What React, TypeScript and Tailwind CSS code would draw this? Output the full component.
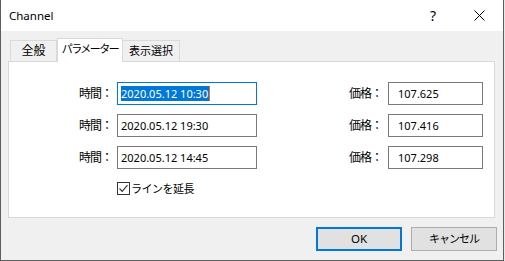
import React from 'react';

const ui = { fontFamily: '"Noto Sans", "Noto Sans CJK JP", sans-serif' };

interface RowProps {
  time: string;
  price: string;
  focused?: boolean;
}

function ParamRow({ time, price, focused = false }: RowProps) {
  return (
    <div className="flex items-center h-[23px]">
      <span className="w-[103px] text-right text-[12px] leading-none text-black tracking-[-1px] whitespace-nowrap">時間：</span>
      <div
        className={`ml-[5px] w-[140px] h-[23px] flex items-center pl-[3px] bg-white border ${
          focused ? 'border-[#0078d7]' : 'border-[#7a7a7a]'
        }`}
      >
        {focused ? (
          <span className="flex items-center h-[15px] pr-[1px] bg-[#0078d7] text-white text-[11px] leading-none border-r border-[#e07020]">
            {time}
          </span>
        ) : (
          <span className="text-[11px] leading-none text-black">{time}</span>
        )}
      </div>
      <span className="w-[125px] text-right text-[12px] leading-none text-black tracking-[-1px] whitespace-nowrap">価格：</span>
      <div className="ml-[6px] w-[95px] h-[23px] flex items-center pl-[9px] bg-white border border-[#7a7a7a]">
        <span className="text-[11px] leading-none text-black">{price}</span>
      </div>
    </div>
  );
}

export default function App() {
  const rows: RowProps[] = [
    { time: '2020.05.12 10:30', price: '107.625', focused: true },
    { time: '2020.05.12 19:30', price: '107.416' },
    { time: '2020.05.12 14:45', price: '107.298' },
  ];

  return (
    <div className="w-[505px] h-[261px] bg-[#e8e8e8]" style={ui}>
      <div className="w-[504px] h-[261px] flex flex-col bg-[#f0f0f0] border-l border-r border-b border-[#5e5e5e]">
        {/* タイトルバー */}
        <div className="h-[31px] bg-white flex items-center">
          <span className="ml-[8px] text-[11.5px] text-black">Channel</span>
          <div className="flex-1" />
          <div className="w-[46px] h-[31px] flex items-center justify-center text-[14px] text-black">?</div>
          <div className="w-[46px] h-[31px] flex items-center justify-center mr-[1px]">
            <svg width="11" height="11" viewBox="0 0 11 11">
              <path d="M0.5 0.5 L10.5 10.5 M10.5 0.5 L0.5 10.5" stroke="#000" strokeWidth="1" />
            </svg>
          </div>
        </div>

        {/* タブ */}
        <div className="flex items-end h-[30px] pl-[9px]">
          <div className="w-[47px] h-[21px] bg-[#f0f0f0] border border-b-0 border-[#d9d9d9] flex items-center justify-center text-[12px] text-black whitespace-nowrap">
            全般
          </div>
          <div className="w-[66px] h-[24px] -mb-[1px] bg-white border border-b-0 border-[#d9d9d9] flex items-center justify-center pb-[2px] text-[11px] tracking-[-1.5px] text-black whitespace-nowrap relative z-10">
            パラメーター
          </div>
          <div className="w-[57px] h-[21px] bg-[#f0f0f0] border border-b-0 border-l-0 border-[#d9d9d9] flex items-center justify-center text-[11px] text-black whitespace-nowrap">
            表示選択
          </div>
        </div>

        {/* パネル */}
        <div className="ml-[7px] w-[487px] h-[157px] bg-white border border-[#d9d9d9] pt-[20px] flex flex-col">
          <div className="flex flex-col gap-[9px]">
            {rows.map((r) => (
              <ParamRow key={r.time} {...r} />
            ))}
          </div>
          <div className="flex items-center mt-[13px] ml-[108px] h-[13px]">
            <div className="w-[13px] h-[13px] border border-[#333] bg-white flex items-center justify-center">
              <svg width="11" height="11" viewBox="0 0 11 11">
                <path d="M1.5 5.5 L4.2 8.3 L9.5 2.2" stroke="#333" strokeWidth="1.2" fill="none" />
              </svg>
            </div>
            <span className="ml-[1px] text-[11px] tracking-[-0.5px] leading-none text-black whitespace-nowrap">ラインを延長</span>
          </div>
        </div>

        {/* ボタン */}
        <div className="flex justify-end gap-[9px] mt-[9px] pr-[6px]">
          <button className="w-[86px] h-[24px] bg-[#e1e1e1] border-2 border-[#0078d7] text-[11.5px] text-black">
            OK
          </button>
          <button className="w-[86px] h-[24px] bg-[#e1e1e1] border border-[#adadad] text-[11px] tracking-[-1px] text-black whitespace-nowrap">
            キャンセル
          </button>
        </div>
      </div>
    </div>
  );
}
